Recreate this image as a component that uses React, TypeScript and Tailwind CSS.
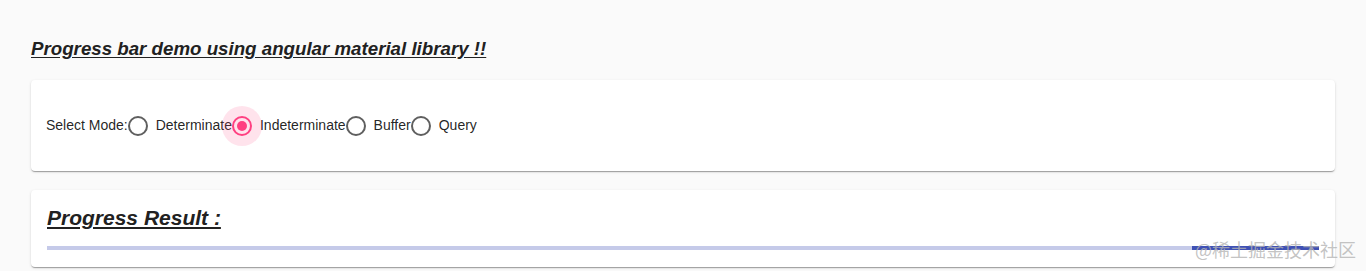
const MODES = ['Determinate', 'Indeterminate', 'Buffer', 'Query'];

function Radio({ label, checked }: { label: string; checked?: boolean }) {
  return (
    <label className="flex items-center">
      <span className="relative flex h-5 w-5 items-center justify-center">
        {checked && <span className="absolute -inset-[10px] rounded-full bg-[#ff4081]/15" />}
        <span
          className={`relative h-5 w-5 rounded-full border-2 ${checked ? 'border-[#ff4081]' : 'border-[#5f5f5f]'}`}
        />
        {checked && <span className="absolute h-[10px] w-[10px] rounded-full bg-[#ff4081]" />}
      </span>
      <span className="pl-2">{label}</span>
    </label>
  );
}

export default function App() {
  return (
    <div className="relative min-h-[271px] bg-[#fafafa] px-[31px] pt-[38px] font-['Liberation_Sans',Arial,sans-serif] text-[rgba(0,0,0,0.87)]">
      <h1 className="h-[22px] text-[18.72px] font-bold italic leading-[22px] text-[#212121] underline underline-offset-2">
        Progress bar demo using angular material library !!
      </h1>

      <div className="mt-5 flex h-[91px] items-center rounded bg-white pl-[15px] pr-4 text-[14px] shadow-[0_2px_1px_-1px_rgba(0,0,0,0.2),0_1px_1px_0_rgba(0,0,0,0.14),0_1px_3px_0_rgba(0,0,0,0.12)]">
        <span>Select Mode:</span>
        {MODES.map((m) => (
          <Radio key={m} label={m} checked={m === 'Indeterminate'} />
        ))}
      </div>

      <div className="mt-[19px] rounded bg-white px-4 pt-4 pb-[17px] shadow-[0_2px_1px_-1px_rgba(0,0,0,0.2),0_1px_1px_0_rgba(0,0,0,0.14),0_1px_3px_0_rgba(0,0,0,0.12)]">
        <h2 className="h-6 text-[21px] font-bold italic leading-6 text-[#212121] underline underline-offset-2">
          Progress Result :
        </h2>
        <div className="mt-4 flex h-1 bg-[#c5cae9]">
          <div className="flex-1" />
          <div className="w-[127px] bg-[#3f51b5]" />
        </div>
      </div>

      <div className="absolute right-[10px] bottom-[12px] text-[18px] leading-5 text-[#b4b4b4]/80 font-['Noto_Sans_CJK_SC',sans-serif]">
        @稀土掘金技术社区
      </div>
    </div>
  );
}
